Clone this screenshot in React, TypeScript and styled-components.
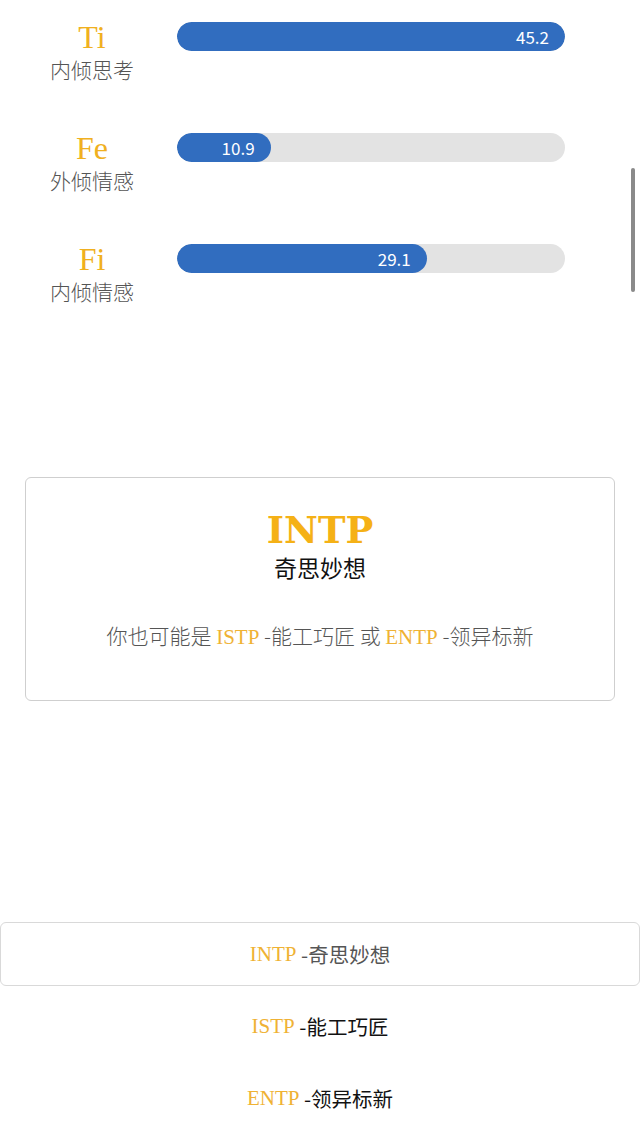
import React from 'react';
import styled, { createGlobalStyle } from 'styled-components';

const GlobalStyle = createGlobalStyle`
  html, body {
    margin: 0;
    padding: 0;
    background: #ffffff;
    overflow: hidden;
  }
  body {
    font-family: "Noto Sans CJK SC", "Noto Sans", sans-serif;
  }
`;

const Page = styled.div`
  position: relative;
  width: 640px;
  height: 1145px;
  padding-top: 20px;
  box-sizing: border-box;
`;

const Row = styled.div`
  display: flex;
  align-items: flex-start;
  height: 111px;
`;

const LabelCol = styled.div`
  width: 154px;
  margin-left: 15px;
  margin-right: 8px;
  display: flex;
  flex-direction: column;
  align-items: center;
`;

const Code = styled.div`
  font-family: "Liberation Serif", serif;
  font-size: 32px;
  line-height: 34px;
  color: #f0b020;
`;

const CodeName = styled.div`
  margin-top: 2px;
  font-size: 21px;
  line-height: 27px;
  font-weight: 300;
  color: #555555;
`;

const Track = styled.div`
  margin-top: 2px;
  width: 388px;
  height: 29px;
  border-radius: 15px;
  background: #e3e3e3;
  overflow: hidden;
`;

const Fill = styled.div`
  height: 100%;
  border-radius: 15px;
  background: #316dbf;
  display: flex;
  align-items: center;
  justify-content: flex-end;
  padding-right: 16px;
  box-sizing: border-box;
  color: #ffffff;
  font-size: 17px;
`;

const Card = styled.div`
  margin: 124px 25px 0;
  height: 224px;
  box-sizing: border-box;
  border: 1px solid #cfcfcf;
  border-radius: 6px;
  padding-top: 30px;
  display: flex;
  flex-direction: column;
  align-items: center;
`;

const TypeTitle = styled.div`
  font-family: "DejaVu Serif", "Liberation Serif", serif;
  font-weight: 700;
  font-size: 37px;
  line-height: 44px;
  color: #f5b116;
`;

const TypeName = styled.div`
  font-size: 23px;
  line-height: 30px;
  color: #111111;
`;

const Alt = styled.div`
  margin-top: 38px;
  font-size: 21px;
  line-height: 30px;
  font-weight: 300;
  color: #555555;
`;

const Gold = styled.span`
  font-family: "Liberation Serif", serif;
  font-size: 21px;
  font-weight: 400;
  color: #efb234;
`;

const List = styled.div`
  margin-top: 221px;
  display: flex;
  flex-direction: column;
`;

const ListItem = styled.div<{ $active?: boolean }>`
  height: 64px;
  margin-bottom: 8px;
  box-sizing: border-box;
  border: 1px solid ${(p) => (p.$active ? '#d9d9d9' : 'transparent')};
  border-radius: 6px;
  display: flex;
  align-items: center;
  justify-content: center;
  font-size: 20.5px;
  color: ${(p) => (p.$active ? '#555555' : '#111111')};
`;

const ScrollThumb = styled.div`
  position: absolute;
  left: 631px;
  top: 168px;
  width: 4px;
  height: 124px;
  border-radius: 2px;
  background: #8a8a8a;
`;

const functions = [
  { code: 'Ti', name: '内倾思考', value: 45.2 },
  { code: 'Fe', name: '外倾情感', value: 10.9 },
  { code: 'Fi', name: '内倾情感', value: 29.1 },
];

const types = [
  { code: 'INTP', name: '奇思妙想' },
  { code: 'ISTP', name: '能工巧匠' },
  { code: 'ENTP', name: '领异标新' },
];

export default function App() {
  const max = Math.max(...functions.map((f) => f.value));

  return (
    <>
      <GlobalStyle />
      <Page>
        {functions.map((f) => (
          <Row key={f.code}>
            <LabelCol>
              <Code>{f.code}</Code>
              <CodeName>{f.name}</CodeName>
            </LabelCol>
            <Track>
              <Fill style={{ width: `${(f.value / max) * 100}%` }}>{f.value}</Fill>
            </Track>
          </Row>
        ))}

        <Card>
          <TypeTitle>INTP</TypeTitle>
          <TypeName>奇思妙想</TypeName>
          <Alt>
            你也可能是 <Gold>ISTP</Gold> -能工巧匠 或 <Gold>ENTP</Gold> -领异标新
          </Alt>
        </Card>

        <List>
          {types.map((t, i) => (
            <ListItem key={t.code} $active={i === 0}>
              <Gold>{t.code}</Gold>&nbsp;-{t.name}
            </ListItem>
          ))}
        </List>

        <ScrollThumb />
      </Page>
    </>
  );
}
